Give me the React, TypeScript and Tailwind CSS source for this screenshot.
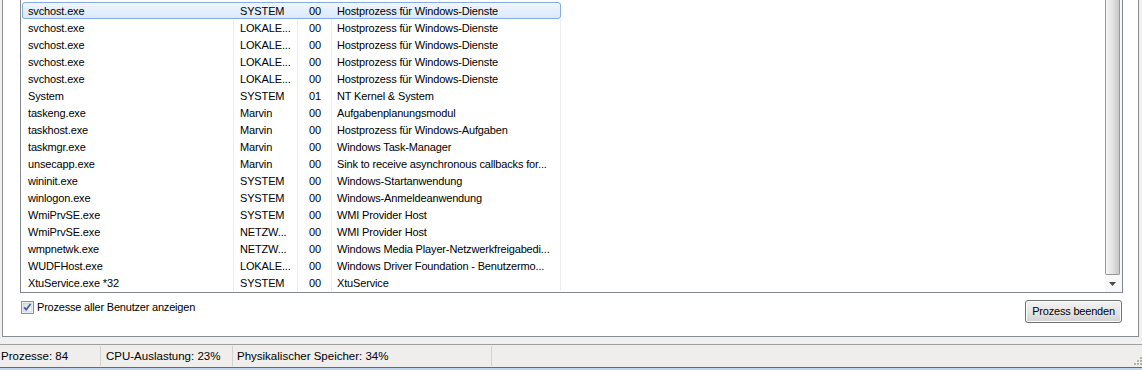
const rows = [
	{ name: 'svchost.exe', user: 'SYSTEM', cpu: '00', desc: 'Hostprozess für Windows-Dienste', selected: true },
	{ name: 'svchost.exe', user: 'LOKALE...', cpu: '00', desc: 'Hostprozess für Windows-Dienste' },
	{ name: 'svchost.exe', user: 'LOKALE...', cpu: '00', desc: 'Hostprozess für Windows-Dienste' },
	{ name: 'svchost.exe', user: 'LOKALE...', cpu: '00', desc: 'Hostprozess für Windows-Dienste' },
	{ name: 'svchost.exe', user: 'LOKALE...', cpu: '00', desc: 'Hostprozess für Windows-Dienste' },
	{ name: 'System', user: 'SYSTEM', cpu: '01', desc: 'NT Kernel & System' },
	{ name: 'taskeng.exe', user: 'Marvin', cpu: '00', desc: 'Aufgabenplanungsmodul' },
	{ name: 'taskhost.exe', user: 'Marvin', cpu: '00', desc: 'Hostprozess für Windows-Aufgaben' },
	{ name: 'taskmgr.exe', user: 'Marvin', cpu: '00', desc: 'Windows Task-Manager' },
	{ name: 'unsecapp.exe', user: 'Marvin', cpu: '00', desc: 'Sink to receive asynchronous callbacks for...' },
	{ name: 'wininit.exe', user: 'SYSTEM', cpu: '00', desc: 'Windows-Startanwendung' },
	{ name: 'winlogon.exe', user: 'SYSTEM', cpu: '00', desc: 'Windows-Anmeldeanwendung' },
	{ name: 'WmiPrvSE.exe', user: 'SYSTEM', cpu: '00', desc: 'WMI Provider Host' },
	{ name: 'WmiPrvSE.exe', user: 'NETZW...', cpu: '00', desc: 'WMI Provider Host' },
	{ name: 'wmpnetwk.exe', user: 'NETZW...', cpu: '00', desc: 'Windows Media Player-Netzwerkfreigabedi...' },
	{ name: 'WUDFHost.exe', user: 'LOKALE...', cpu: '00', desc: 'Windows Driver Foundation - Benutzermo...' },
	{ name: 'XtuService.exe *32', user: 'SYSTEM', cpu: '00', desc: 'XtuService' },
];

type RowProps = { name: string; user: string; cpu: string; desc: string; selected?: boolean };

function ProcessRow({ name, user, cpu, desc, selected }: RowProps) {
	const line = selected ? 'border-transparent' : 'border-[#ededed]';
	return (
		<div
			className={
				selected
					? 'ml-px flex h-[17px] w-[539px] rounded-[3px] bg-gradient-to-b from-[#f1f7fe] to-[#d9e8fb] leading-[16px] outline -outline-offset-1 outline-[#84acdd]'
					: 'ml-px flex h-[17px] w-[539px] leading-[16px]'
			}
		>
			<div className={`w-[212px] overflow-hidden whitespace-nowrap border-r pl-[6px] pt-px ${line}`}>{name}</div>
			<div className={`w-[64px] overflow-hidden whitespace-nowrap border-r pl-[6px] pt-px ${line}`}>{user}</div>
			<div className={`w-[34px] border-r pr-[10px] pt-px text-right ${line}`}>{cpu}</div>
			<div className={`w-[229px] overflow-hidden whitespace-nowrap border-r pl-[5px] pt-px ${line}`}>{desc}</div>
		</div>
	);
}

function Scrollbar() {
	return (
		<div className="flex w-[17px] flex-col bg-[#f8f8f8]">
			<div className="h-[275px] w-[15px] rounded-b-[2px] border border-t-0 border-[#979797] bg-gradient-to-r from-[#f6f6f6] via-[#e3e3e3] to-[#c6c6c6]" />
			<div className="flex flex-1 items-center justify-center pr-[2px]">
				<svg width="7" height="4" viewBox="0 0 7 4">
					<path d="M0 0h7L3.5 4z" fill="#4a4a4a" />
				</svg>
			</div>
		</div>
	);
}

function Checkbox() {
	return (
		<svg width="13" height="13" viewBox="0 0 13 13">
			<defs>
				<linearGradient id="cb" x1="0" y1="0" x2="1" y2="1">
					<stop offset="0" stopColor="#d8dce3" />
					<stop offset="1" stopColor="#f7f8fa" />
				</linearGradient>
			</defs>
			<rect x="0.5" y="0.5" width="12" height="12" fill="#fff" stroke="#8f8f8f" />
			<rect x="2" y="2" width="9" height="9" fill="url(#cb)" stroke="#b8bcc4" strokeWidth="0.6" />
			<path d="M3.2 6.4l2 2.3 4.3-5.6" fill="none" stroke="#3c5aa0" strokeWidth="1.7" />
		</svg>
	);
}

function StatusBar() {
	return (
		<div className="mt-[7px] flex h-[23px] border-t border-[#a0a0a0] bg-[#f0eeec] text-[11.5px] leading-[22px]">
			<div className="my-px w-[101px] border-r border-[#d6d3cf] pl-px leading-[20px]">Prozesse: 84</div>
			<div className="my-px w-[132px] border-r border-[#d6d3cf] pl-[5px] leading-[20px]">CPU-Auslastung: 23%</div>
			<div className="my-px w-[259px] border-r border-[#d6d3cf] pl-[4px] leading-[20px]">Physikalischer Speicher: 34%</div>
			<div className="flex flex-1 items-end justify-end pb-[2px]">
				<svg width="8" height="8" viewBox="0 0 8 8">
					<g fill="#b5b2ad">
						<rect x="6" y="0" width="2" height="2" />
						<rect x="3" y="3" width="2" height="2" />
						<rect x="6" y="3" width="2" height="2" />
						<rect x="0" y="6" width="2" height="2" />
						<rect x="3" y="6" width="2" height="2" />
						<rect x="6" y="6" width="2" height="2" />
					</g>
				</svg>
			</div>
		</div>
	);
}

export default function App() {
	return (
		<div className="h-[370px] w-[1142px] overflow-hidden bg-[#f0f0f0] font-['Liberation_Sans',Arial,sans-serif] text-black">
			<div className="ml-[2px] h-[337px] w-[1137px] border-x border-b border-[#898c95] bg-white">
				<div className="ml-[17px] flex h-[293px] w-[1103px] border-x border-b border-[#828790]">
					<div className="flex-1 pt-[2px] text-[11px] tracking-[-0.15px]">
						{rows.map((r, i) => (
							<ProcessRow key={i} {...r} />
						))}
					</div>
					<Scrollbar />
				</div>
				<div className="ml-[18px] mt-[7px] flex w-[1101px] items-start justify-between text-[11px] tracking-[-0.2px]">
					<label className="mt-px flex items-center gap-[3px] leading-[13px]">
						<Checkbox />
						<span>Prozesse aller Benutzer anzeigen</span>
					</label>
					<button className="h-[23px] w-[97px] rounded-[3px] border border-[#707070] bg-gradient-to-b from-[#f2f2f2] via-[#e6e6e6] to-[#d2d2d2] leading-[21px] shadow-[inset_0_0_0_1px_#fcfcfc]">
						Prozess beenden
					</button>
				</div>
			</div>
			<StatusBar />
			<div className="h-[3px] border-t border-[#5d6b80] bg-[#c2d6ee]" />
		</div>
	);
}
